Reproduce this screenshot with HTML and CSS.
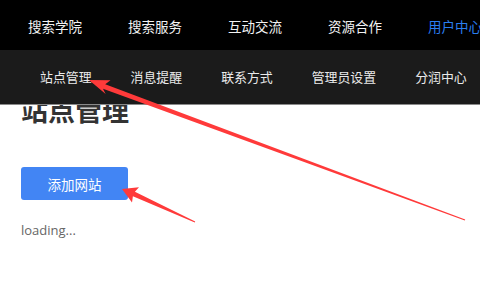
FILE: index.html
```html
<!DOCTYPE html>
<html lang="zh-CN">
<head>
<meta charset="utf-8">
<title>站点管理</title>
<link rel="stylesheet" href="styles.css">
</head>
<body>
<header class="header">
  <nav class="top-nav">
    <a class="top-item">搜索学院</a>
    <a class="top-item">搜索服务</a>
    <a class="top-item">互动交流</a>
    <a class="top-item">资源合作</a>
    <a class="top-item active">用户中心</a>
  </nav>
  <nav class="sub-nav">
    <a class="sub-item">站点管理</a>
    <a class="sub-item">消息提醒</a>
    <a class="sub-item">联系方式</a>
    <a class="sub-item">管理员设置</a>
    <a class="sub-item">分润中心</a>
  </nav>
</header>
<main class="main">
  <h1 class="title">站点管理</h1>
  <button class="btn-add">添加网站</button>
  <p class="loading">loading...</p>
</main>
<svg class="arrows" width="480" height="300" viewBox="0 0 480 300">
  <polygon fill="#ff3a3a" points="89,80 110.5,80.2 105.2,84.3 465.2,219.5 464.8,220.5 103.0,88.8 105.6,94.0"/>
  <polygon fill="#ff3a3a" points="122,189 139.0,187.3 134.9,191.7 195.2,221.5 194.8,222.5 132.9,196.2 132.0,202.5"/>
</svg>
</body>
</html>
```
FILE: styles.css
```css
html, body {
  margin: 0;
  padding: 0;
  background: #fff;
  width: 480px;
  height: 300px;
  overflow: hidden;
  font-family: "Noto Sans CJK SC", "Noto Sans", sans-serif;
}

.header {
  position: fixed;
  top: 0;
  left: 0;
  right: 0;
  z-index: 2;
}

.top-nav {
  height: 50px;
  background: #000;
  display: flex;
  align-items: center;
  gap: 46px;
  padding: 1px 0 0 28px;
  box-sizing: border-box;
  white-space: nowrap;
  overflow: hidden;
}

.top-item {
  color: #f2f2f2;
  font-size: 13.5px;
  flex: none;
}

.top-item.active {
  color: #2a7ef0;
}

.sub-nav {
  height: 55px;
  background: #1b1b1b;
  border-bottom: 1px solid #8a8a8a;
  display: flex;
  align-items: center;
  gap: 39px;
  padding: 0 0 2px 40px;
  box-sizing: border-box;
  white-space: nowrap;
  overflow: hidden;
}

.sub-item {
  color: #eaeaea;
  font-size: 12.9px;
  flex: none;
}

.main {
  padding: 95px 21px 0;
  display: flex;
  flex-direction: column;
  align-items: flex-start;
}

.title {
  margin: 0;
  font-size: 27px;
  line-height: 30px;
  font-weight: 700;
  color: #333;
}

.btn-add {
  margin-top: 42px;
  width: 107px;
  height: 33px;
  border: none;
  border-radius: 3px;
  background: #4285f4;
  color: #fff;
  font-family: "Noto Sans CJK SC", sans-serif;
  font-size: 13.5px;
  padding: 0;
}

.loading {
  margin: 21px 0 0;
  font-family: "Open Sans", "Noto Sans", sans-serif;
  font-size: 13px;
  line-height: 18px;
  color: #666;
}

.arrows {
  position: absolute;
  top: 0;
  left: 0;
  z-index: 3;
  pointer-events: none;
}
```
